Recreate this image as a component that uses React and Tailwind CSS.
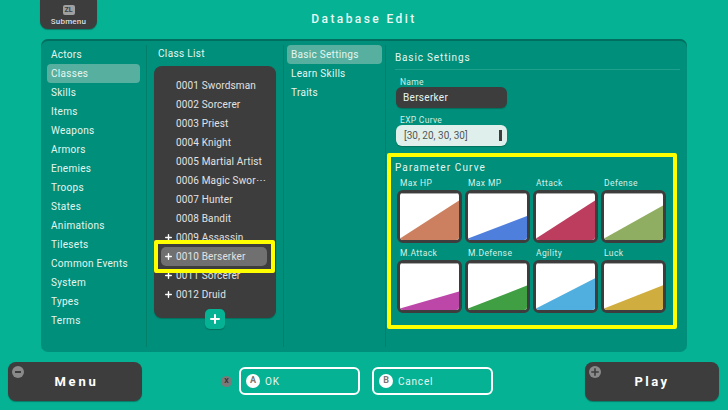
const menuItems = ["Actors", "Classes", "Skills", "Items", "Weapons", "Armors", "Enemies", "Troops", "States", "Animations", "Tilesets", "Common Events", "System", "Types", "Terms"];

const classes = [
  { name: "0001 Swordsman" },
  { name: "0002 Sorcerer" },
  { name: "0003 Priest" },
  { name: "0004 Knight" },
  { name: "0005 Martial Artist" },
  { name: "0006 Magic Swor⋯" },
  { name: "0007 Hunter" },
  { name: "0008 Bandit" },
  { name: "0009 Assassin", plus: true },
  { name: "0010 Berserker", plus: true, selected: true },
  { name: "0011 Sorcerer", plus: true },
  { name: "0012 Druid", plus: true },
];

const curves = [
  { label: "Max HP", color: "#cc8060", end: 14 },
  { label: "Max MP", color: "#4f7fdc", end: 48 },
  { label: "Attack", color: "#bd3d5f", end: 14 },
  { label: "Defense", color: "#90ae62", end: 25 },
  { label: "M.Attack", color: "#bd47a8", end: 60 },
  { label: "M.Defense", color: "#3f9f42", end: 47 },
  { label: "Agility", color: "#50afdf", end: 31 },
  { label: "Luck", color: "#cfae3f", end: 46 },
];

function Plus({ className }) {
  return (
    <svg viewBox="0 0 10 10" className={className}>
      <path d="M5 1v8M1 5h8" stroke="currentColor" strokeWidth="2" strokeLinecap="round" />
    </svg>
  );
}

function CurveTile({ label, color, end }) {
  return (
    <div className="flex flex-col">
      <div className="h-[17px] pl-[3px] text-[8.5px] leading-[21px] tracking-[0.4px] text-[#d5efe8]">{label}</div>
      <div className="h-[53px] w-[65px] overflow-hidden rounded-[6px] border-[3px] border-[#3d3d3d] bg-white">
        <div className="h-[1px] bg-[#a8a8a8]"></div>
        <svg viewBox="0 0 100 100" preserveAspectRatio="none" className="block h-[46px] w-full">
          <polygon points={`0,97 100,${end} 100,100 0,100`} fill={color} />
        </svg>
      </div>
    </div>
  );
}

function Footer() {
  return (
    <div className="flex h-[58px] items-start pl-[8px] pt-[10px]">
      <button className="relative h-[39px] w-[134px] rounded-[8px] bg-[#3d3d3d] pl-[3px] text-[13px] font-bold tracking-[2.8px] text-white shadow-[0_1px_1px_#067a66]">
        Menu
        <span className="absolute left-[4px] top-[4px] flex h-[12px] w-[12px] items-center justify-center rounded-full bg-[#8a8a8a]">
          <span className="h-[2px] w-[6px] bg-[#3d3d3d]"></span>
        </span>
      </button>
      <div className="ml-[79px] mt-[14px] flex h-[11px] w-[11px] items-center justify-center rounded-full bg-[#7a7a7a] text-[7px] font-bold text-[#333]">X</div>
      <button className="ml-[7px] mt-[5px] flex h-[28px] w-[121px] items-center gap-[5px] rounded-[6px] border-2 border-white pl-[5px] text-[10px] tracking-[0.8px] text-[#e4f6f1]">
        <span className="flex h-[14px] w-[14px] items-center justify-center rounded-full bg-white text-[9px] font-bold tracking-normal text-[#777]">A</span>
        OK
      </button>
      <button className="ml-[12px] mt-[5px] flex h-[28px] w-[121px] items-center gap-[5px] rounded-[6px] border-2 border-white pl-[5px] text-[10px] tracking-[0.8px] text-[#e4f6f1]">
        <span className="flex h-[14px] w-[14px] items-center justify-center rounded-full bg-white text-[9px] font-bold tracking-normal text-[#777]">B</span>
        Cancel
      </button>
      <button className="relative ml-[92px] h-[39px] w-[134px] rounded-[8px] bg-[#3d3d3d] text-[13px] font-bold tracking-[2.5px] text-white shadow-[0_1px_1px_#067a66]">
        Play
        <span className="absolute left-[4px] top-[4px] flex h-[12px] w-[12px] items-center justify-center rounded-full bg-[#8a8a8a]">
          <Plus className="h-[8px] w-[8px] text-[#3d3d3d]" />
        </span>
      </button>
    </div>
  );
}

export default function App() {
  return (
    <div className="flex h-[410px] w-[728px] flex-col overflow-hidden bg-[#06b294] font-['Roboto',sans-serif] text-[#e4f6f1]">
      {/* header */}
      <div className="relative flex h-[39px] shrink-0 justify-center">
        <span className="mt-[10px] text-[12px] font-medium leading-[18px] tracking-[2.4px] text-[#e9f8f4]">Database Edit</span>
        <div className="absolute left-[40px] top-0 flex h-[29px] w-[57px] flex-col items-center rounded-b-[8px] bg-[#3d3d3d] shadow-[0_1px_1px_#067a66]">
          <span className="mt-[5px] flex h-[10px] w-[12px] items-center justify-center rounded-[2px] bg-[#a0a0a0] text-[7px] font-bold leading-none text-[#3d3d3d]">ZL</span>
          <span className="mt-[1px] text-[8px] font-medium leading-[11px] tracking-[0.2px] text-[#ddd]">Submenu</span>
        </div>
      </div>

      {/* main panel */}
      <div className="ml-[41px] flex h-[313px] w-[646px] shrink-0 rounded-[7px] bg-[#008f7a] shadow-[inset_0_2px_0_#006f5f]">
        <div className="my-[6px] h-[302px] w-[106px] border-r border-[#007f6b] px-[6px] text-[10px] tracking-[0.3px]">
          {menuItems.map((item) => (
            <div key={item} className={`h-[19px] whitespace-nowrap rounded-[4px] pl-[4px] leading-[19px] ${item === "Classes" ? "bg-[#57b09f]" : ""}`}>{item}</div>
          ))}
        </div>

        <div className="my-[6px] h-[302px] w-[137px] border-r border-[#007f6b] text-[10px] tracking-[0.35px]">
          <div className="h-[21px] pl-[11px] leading-[18px]">Class List</div>
          <div className="relative ml-[7px] h-[252px] w-[122px] rounded-[8px] bg-[#3d3d3d] pt-[10px] tracking-[0.15px] text-[#e2e2e2] shadow-[0_1px_1px_#00705f]">
            {classes.map((c) => (
              <div key={c.name} className={`relative ml-[7px] mr-[9px] flex h-[19px] items-center pl-[15px] leading-[19px] ${c.selected ? "rounded-[5px] bg-[#707070]" : ""}`}>
                {c.plus && <Plus className="absolute left-[4px] top-[6px] h-[7px] w-[7px] text-white" />}
                <span className="whitespace-nowrap">{c.name}</span>
              </div>
            ))}
            {/* yellow callout */}
            <div className="absolute left-0 top-[174px] h-[33px] w-[121px] rounded-[2px] border-4 border-[#ffff00]"></div>
            <button className="absolute bottom-[-11px] left-[51px] flex h-[20px] w-[20px] items-center justify-center rounded-[5px] bg-[#06b294] text-white shadow-[0_1px_1px_#00705f]">
              <Plus className="h-[10px] w-[10px]" />
            </button>
          </div>
        </div>

        <div className="my-[6px] h-[302px] w-[102px] border-r border-[#007f6b] px-[3px] text-[10px] tracking-[0.3px]">
          {["Basic Settings", "Learn Skills", "Traits"].map((item, i) => (
            <div key={item} className={`h-[19px] rounded-[4px] pl-[4px] leading-[19px] ${i === 0 ? "bg-[#57b09f]" : ""}`}>{item}</div>
          ))}
        </div>

        <div className="-ml-[1px] flex flex-1 flex-col">
          <div className="ml-[10px] mr-[7px] mt-[8px] h-[23px] border-b border-[#1fa08c] text-[10px] leading-[21px] tracking-[0.85px]">Basic Settings</div>
          <div className="ml-[11px] w-[111px]">
            <div className="h-[17px] pl-[4px] text-[8.5px] leading-[24px] tracking-[0.3px] text-[#cfeee6]">Name</div>
            <div className="h-[21px] rounded-[6px] bg-[#3d3d3d] pl-[7px] text-[10px] leading-[21px] tracking-[0.3px] shadow-[0_1px_1px_#00705f]">Berserker</div>
            <div className="h-[17px] pl-[4px] text-[8.5px] leading-[24px] tracking-[0.3px] text-[#cfeee6]">EXP Curve</div>
            <div className="flex h-[21px] items-center justify-between rounded-[6px] bg-[#dff0ec] pl-[8px] pr-[5px] text-[10px] text-[#555] shadow-[0_1px_1px_#00705f]">
              [30, 20, 30, 30]
              <span className="h-[11px] w-[3px] bg-[#3d3d3d]"></span>
            </div>
          </div>
          {/* yellow callout */}
          <div className="ml-[2px] mt-[7px] h-[176px] w-[290px] rounded-[2px] border-4 border-[#ffff00] pl-[6px] pt-[3px]">
            <div className="-ml-[2px] h-[13px] text-[10px] leading-[15px] tracking-[1.1px]">Parameter Curve</div>
            <div className="grid w-[269px] grid-cols-4 gap-x-[3px]">
              {curves.map((c) => (
                <CurveTile key={c.label} {...c} />
              ))}
            </div>
          </div>
        </div>
      </div>

      <Footer />
    </div>
  );
}
